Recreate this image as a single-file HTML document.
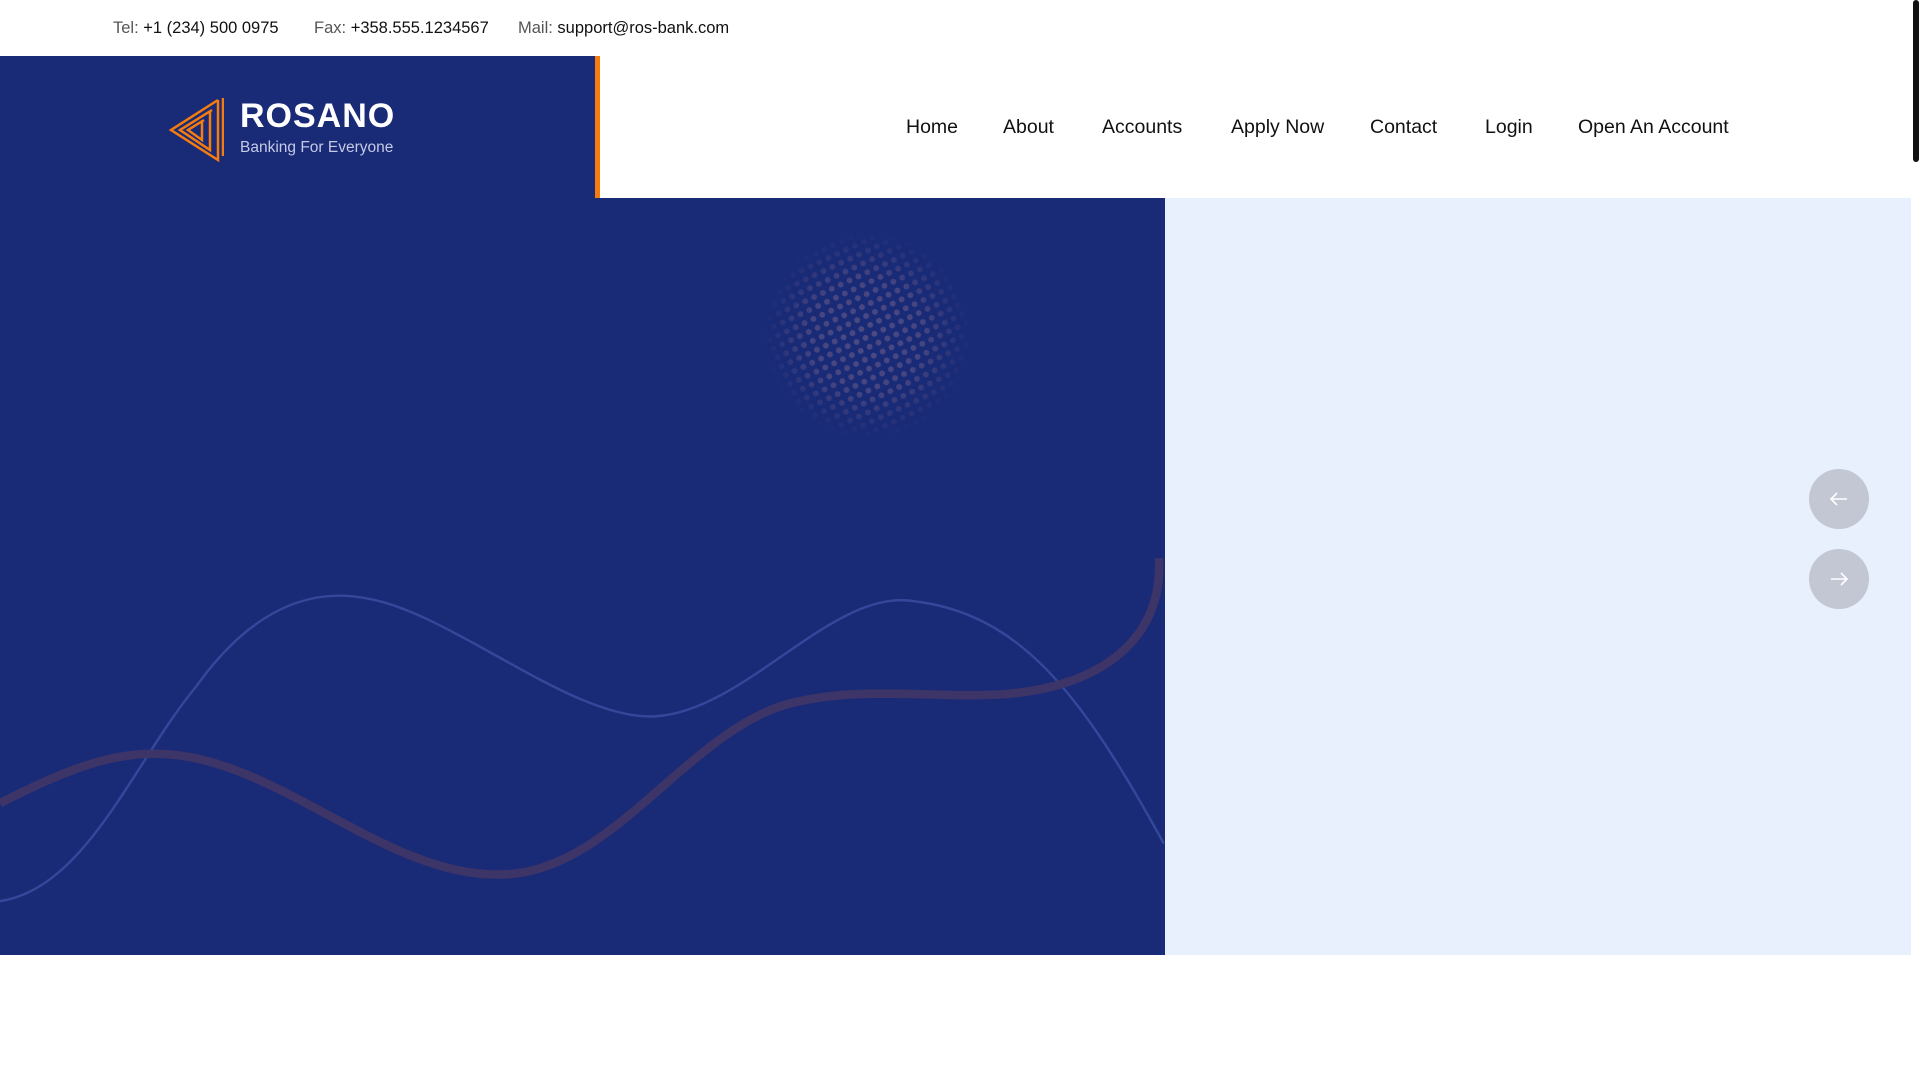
<!DOCTYPE html>
<html><head><meta charset="utf-8"><style>
*{margin:0;padding:0;box-sizing:border-box}
body{width:1920px;height:1080px;overflow:hidden;background:#fff;font-family:"Liberation Sans",sans-serif;position:relative}
.top{position:absolute;top:0;left:0;width:1920px;height:56px;font-size:16.5px;color:#555}
.top span{position:absolute;top:19px}
.top b{font-weight:normal;color:#111}
.logo{position:absolute;left:0;top:56px;width:595px;height:142px;background:#192a77}
.obar{position:absolute;left:595px;top:56px;width:5px;height:142px;background:#f57c0f}
.brand{position:absolute;left:240px;top:97px;color:#fff;font-weight:bold;font-size:34px;letter-spacing:1px}
.tag{position:absolute;left:240px;top:139px;color:#c5cae6;font-size:15.5px}
.nav{position:absolute;top:116px;font-size:19.5px;color:#111}
.hero{position:absolute;left:0;top:198px;width:1165px;height:757px;background:#192a77;overflow:hidden}
.light{position:absolute;left:1165px;top:198px;width:746px;height:757px;background:#e8effd}
.btn{position:absolute;left:1809px;width:60px;height:60px;border-radius:50%;background:#c2c7d3}
.sb{position:absolute;left:1913px;top:0;width:6px;height:162px;background:#111;border-radius:3px}
</style></head><body>
<div class="top">
<span style="left:113px">Tel: <b>+1 (234) 500 0975</b></span>
<span style="left:314px">Fax: <b>+358.555.1234567</b></span>
<span style="left:518px">Mail: <b>support@ros-bank.com</b></span>
</div>
<div class="logo"></div><div class="obar"></div>
<svg style="position:absolute;left:168px;top:98px" width="56" height="64" viewBox="0 0 56 64" fill="none" stroke="#f57c0f" stroke-width="2.5">
<polyline points="50,2 3,32 50,62 50,2"/>
<polyline points="44,12 12,32 42,52 42,14"/>
<polyline points="36,22 20,32 34,42 34,24"/>
<line x1="55" y1="0" x2="55" y2="58"/>
</svg>
<div class="brand">ROSANO</div>
<div class="tag">Banking For Everyone</div>
<div class="nav" style="left:906px">Home</div>
<div class="nav" style="left:1003px">About</div>
<div class="nav" style="left:1102px">Accounts</div>
<div class="nav" style="left:1231px">Apply Now</div>
<div class="nav" style="left:1370px">Contact</div>
<div class="nav" style="left:1485px">Login</div>
<div class="nav" style="left:1578px">Open An Account</div>
<div class="hero">
<svg width="1165" height="757" viewBox="0 161 951 618" preserveAspectRatio="none">
<defs>
<pattern id="p" width="8" height="8" patternUnits="userSpaceOnUse" patternTransform="rotate(-25)"><circle cx="4" cy="4" r="2.4" fill="#4d4a82"/></pattern>
<radialGradient id="g"><stop offset="0" stop-color="#fff"/><stop offset="0.55" stop-color="#fff" stop-opacity=".85"/><stop offset="1" stop-color="#fff" stop-opacity="0"/></radialGradient>
<mask id="m"><circle cx="708" cy="273" r="85" fill="url(#g)"/></mask>
</defs>
<rect x="615" y="180" width="190" height="190" fill="url(#p)" mask="url(#m)"/>
<path d="M0,735 C70,725 110,620 160,560 C210,490 260,480 300,488 C370,500 470,590 537,584 C610,578 680,480 745,490 C830,500 880,560 950,688" stroke="#34479a" stroke-width="2" fill="none"/>
<path d="M0,655 C50,630 90,612 135,615 C230,620 320,720 415,713 C500,708 560,600 640,575 C700,558 760,570 820,566 C900,560 950,520 946,455" stroke="#3d3468" stroke-width="7" fill="none"/>
</svg>
</div>
<div class="light"></div>
<div class="btn" style="top:469px"><svg width="60" height="60" viewBox="0 0 60 60" fill="none" stroke="#fff" stroke-width="1.6"><path d="M22,30H38M28,24L22,30L28,36"/></svg></div>
<div class="btn" style="top:549px"><svg width="60" height="60" viewBox="0 0 60 60" fill="none" stroke="#fff" stroke-width="1.6"><path d="M22,30H38M32,24L38,30L32,36"/></svg></div>
<div class="sb"></div>
</body></html>
